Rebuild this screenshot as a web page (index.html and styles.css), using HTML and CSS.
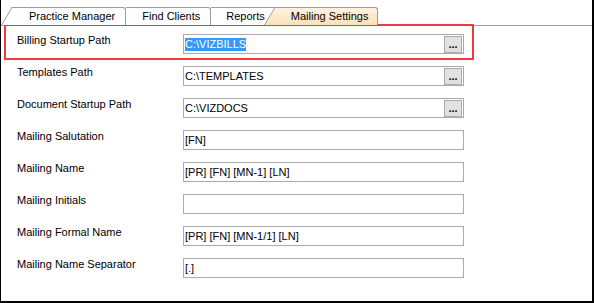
FILE: index.html
```html
<!DOCTYPE html>
<html lang="en">
<head>
    <meta charset="UTF-8">
    <title>Mailing Settings</title>
    <link rel="stylesheet" href="styles.css">
</head>
<body>
  <div class="window">
    <div class="tabs">
        <div class="tab first">Practice Manager</div>
        <div class="tab second">Find Clients</div>
        <div class="tab third">Reports</div>
        <div class="tab active">Mailing Settings</div>
    </div>

    <div class="panel">
        <div class="row highlight">
            <label>Billing Startup Path</label>
            <div class="field"><span class="selected">C:\VIZBILLS</span><button class="browse">...</button></div>
        </div>
        <div class="row">
            <label>Templates Path</label>
            <div class="field"><span>C:\TEMPLATES</span><button class="browse">...</button></div>
        </div>
        <div class="row">
            <label>Document Startup Path</label>
            <div class="field"><span>C:\VIZDOCS</span><button class="browse">...</button></div>
        </div>
        <div class="row">
            <label>Mailing Salutation</label>
            <div class="field"><span>[FN]</span></div>
        </div>
        <div class="row">
            <label>Mailing Name</label>
            <div class="field"><span>[PR] [FN] [MN-1] [LN]</span></div>
        </div>
        <div class="row">
            <label>Mailing Initials</label>
            <div class="field"></div>
        </div>
        <div class="row">
            <label>Mailing Formal Name</label>
            <div class="field"><span>[PR] [FN] [MN-1/1] [LN]</span></div>
        </div>
        <div class="row">
            <label>Mailing Name Separator</label>
            <div class="field"><span>[.]</span></div>
        </div>
    </div>
  </div>
</body>
</html>
```

FILE: styles.css
```css
body {
    margin: 0;
    background: #fff;
    color: #000;
    font-family: "Liberation Sans", Arial, sans-serif;
    font-size: 11px;
}

.window {
    width: 594px;
    height: 303px;
    box-sizing: border-box;
    border-left: 1px solid #000;
    border-right: 2px solid #000;
    border-bottom: 2px solid #000;
    overflow: hidden;
}

/* tab strip */
.tabs {
    display: flex;
    align-items: flex-end;
    height: 25px;
    padding-left: 11px;
}

.tab {
    position: relative;
    z-index: 1;
    line-height: 16px;
    padding: 0 10px 1px 16px;
    border-top: 1px solid #9c9c9c;
    border-right: 1px solid #9c9c9c;
    border-radius: 0 3px 0 0;
    background: #fff;
    white-space: nowrap;
}

.tab.first {
    padding-left: 17px;
}

.tab.third {
    padding: 0 12px 1px 15px;
}

.tab.active {
    z-index: 2;
    margin-left: -2px;
    padding: 0 9px 1px 15px;
    background: linear-gradient(#fff2de, #fbe1b8);
}

/* slanted left edge */
.tab.first::before,
.tab.active::before {
    content: "";
    position: absolute;
    z-index: -1;
    left: -11px;
    top: -1px;
    bottom: 0;
    width: 16px;
    border-top: 1px solid #9c9c9c;
    border-left: 1px solid #9c9c9c;
    background: inherit;
    transform: skewX(-31deg);
    transform-origin: left bottom;
}

.tab.active::before {
    left: -12px;
    background: linear-gradient(#fff2de, #fbe1b8);
}

/* settings panel */
.panel {
    border-top: 1px solid #a0a0a0;
}

.row {
    display: flex;
    height: 32px;
    box-sizing: border-box;
    padding-left: 16px;
}

.row.highlight {
    width: 470px;
    height: 36px;
    margin: -2px 0 -2px 3px;
    padding-left: 11px;
    border: 2px solid #ee3b3e;
}

.row label {
    width: 166px;
    flex: none;
    margin-top: 8px;
    line-height: 13px;
}

.field {
    display: flex;
    align-items: flex-start;
    width: 281px;
    height: 20px;
    box-sizing: border-box;
    margin-top: 8px;
    padding: 3px 1px 2px 1px;
    border: 1px solid #ababab;
    line-height: 13px;
    white-space: nowrap;
}

.field .selected {
    background: #3399ff;
    color: #fff;
}

.browse {
    width: 18px;
    height: 17px;
    margin: -2px 0 0 auto;
    padding: 0;
    border: 1px solid #adadad;
    background: #e1e1e1;
    font-family: "Liberation Sans", Arial, sans-serif;
    font-size: 11px;
    font-weight: bold;
    line-height: 15px;
    text-align: center;
    color: #000;
}
```
